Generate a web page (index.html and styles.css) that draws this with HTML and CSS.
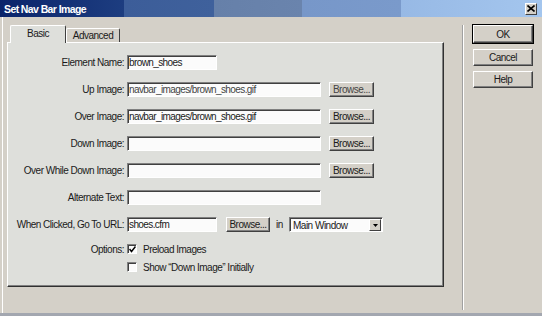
FILE: index.html
```html
<!DOCTYPE html>
<html>
<head>
<meta charset="utf-8">
<link rel="stylesheet" href="styles.css">
</head>
<body>
<div class="window">
  <div class="titlebar">
    <span class="title">Set Nav Bar Image</span>
    <span class="close">
      <svg width="8" height="7" viewBox="0 0 8 7"><path d="M0.5 0.5 L7.5 6.5 M7.5 0.5 L0.5 6.5" stroke="#000" stroke-width="1.6"/></svg>
    </span>
  </div>
  <div class="client">
    <div class="left">
      <div class="tabs">
        <div class="tab active">Basic</div>
        <div class="tab">Advanced</div>
      </div>
      <div class="panel">
        <div class="form">
          <div class="lbl">Element Name:</div>
          <div class="fld"><div class="input short">brown_shoes</div></div>

          <div class="lbl">Up Image:</div>
          <div class="fld"><div class="input long faint">navbar_images/brown_shoes.gif</div><div class="btn browse faint">Browse...</div></div>

          <div class="lbl">Over Image:</div>
          <div class="fld"><div class="input long">navbar_images/brown_shoes.gif</div><div class="btn browse">Browse...</div></div>

          <div class="lbl">Down Image:</div>
          <div class="fld"><div class="input long"></div><div class="btn browse">Browse...</div></div>

          <div class="lbl">Over While Down Image:</div>
          <div class="fld"><div class="input long"></div><div class="btn browse">Browse...</div></div>

          <div class="lbl">Alternate Text:</div>
          <div class="fld"><div class="input long"></div></div>

          <div class="lbl">When Clicked, Go To URL:</div>
          <div class="fld">
            <div class="input short">shoes.cfm</div>
            <div class="btn browse url">Browse...</div>
            <span class="in">in</span>
            <div class="select"><span class="sel-text">Main Window</span><span class="sel-btn"><svg width="5" height="3" viewBox="0 0 5 3"><path d="M0 0 H5 L2.5 3 Z" fill="#000"/></svg></span></div>
          </div>

          <div class="lbl opt-lbl">Options:</div>
          <div class="fld opts">
            <div class="chk-row"><span class="chk"><svg width="7" height="7" viewBox="0 0 7 7"><path d="M0.5 3 L2.5 5.5 L6.5 0.5" stroke="#000" stroke-width="1.5" fill="none"/></svg></span><span>Preload Images</span></div>
            <div class="chk-row"><span class="chk"></span><span>Show “Down Image” Initially</span></div>
          </div>
        </div>
      </div>
    </div>
    <div class="sep"></div>
    <div class="right">
      <div class="btn cmd default">OK</div>
      <div class="btn cmd">Cancel</div>
      <div class="btn cmd">Help</div>
    </div>
  </div>
</div>
</body>
</html>
```
FILE: styles.css
```css
html, body {
  margin: 0;
  padding: 0;
}
body {
  width: 542px;
  height: 316px;
  overflow: hidden;
  font-family: "Liberation Sans", Arial, sans-serif;
  font-size: 10px;
  letter-spacing: -0.5px;
  color: #1a1a1a;
  background: #d4d0c8;
}
.window {
  width: 542px;
  height: 316px;
  box-sizing: border-box;
  background: #d4d0c8;
  border-bottom: 3px solid #a3a7b0;
  display: flex;
  flex-direction: column;
}
.titlebar {
  height: 17px;
  flex: none;
  display: flex;
  align-items: center;
  justify-content: space-between;
  padding: 0 5px 0 4px;
  background: linear-gradient(to right,
    #0a246a 0px, #1d3d80 124px,
    #3c5d99 124px, #3f619c 214px,
    #6680a9 214px, #6a84ad 302px,
    #7797c9 302px, #7a9acb 401px,
    #97b9e5 401px, #a4c6ee 542px);
}
.title {
  color: #fff;
  font-weight: bold;
  font-size: 10.5px;
  letter-spacing: -0.6px;
}
.close {
  width: 12px;
  height: 12px;
  box-sizing: border-box;
  background: #d4d0c8;
  border: 1px solid;
  border-color: #fff #404040 #404040 #fff;
  display: flex;
  align-items: center;
  justify-content: center;
}
.client {
  flex: 1;
  display: flex;
  margin-left: 2px;
  border-left: 1px solid #fff;
  padding-top: 8px;
}
.left {
  margin-left: 4px;
  width: 437px;
}
.tabs {
  height: 17px;
  display: flex;
  align-items: flex-end;
  padding-left: 3px;
}
.tab {
  height: 14px;
  width: 54px;
  box-sizing: border-box;
  border: 1px solid;
  border-color: #fff #404040 transparent #fff;
  border-bottom: none;
  border-radius: 2px 2px 0 0;
  display: flex;
  align-items: center;
  justify-content: center;
  background: #d4d0c8;
}
.tab.active {
  height: 18px;
  width: 56px;
  margin-bottom: -1px;
  position: relative;
  z-index: 1;
  background: #dedfdb;
  padding-bottom: 2px;
}
.panel {
  height: 245px;
  box-sizing: border-box;
  background: #dedfdb;
  border: 1px solid;
  border-color: #fff #303030 #303030 #fff;
  box-shadow: inset -1px -1px 0 #808080;
}
.form {
  display: grid;
  grid-template-columns: 116px 1fr;
  column-gap: 3px;
  row-gap: 12px;
  padding-top: 12px;
}
.lbl {
  text-align: right;
  height: 15px;
  line-height: 15px;
  white-space: nowrap;
}
.fld {
  display: flex;
  align-items: center;
  height: 15px;
}
.input {
  height: 15px;
  box-sizing: border-box;
  background: #fbfbfb;
  border: 1px solid;
  border-color: #808080 #fff #fff #808080;
  box-shadow: inset 1px 1px 0 #404040;
  padding: 0 1px;
  line-height: 13px;
  letter-spacing: -0.6px;
  white-space: nowrap;
  overflow: hidden;
}
.input.short { width: 90px; }
.input.long { width: 194px; }
.faint { color: #444; }
.btn {
  box-sizing: border-box;
  background: #d4d0c8;
  border: 1px solid;
  border-color: #fff #404040 #404040 #fff;
  box-shadow: inset -1px -1px 0 #808080;
  display: flex;
  align-items: center;
  justify-content: center;
  white-space: nowrap;
}
.browse {
  width: 45px;
  height: 15px;
  margin-left: 8px;
}
.browse.url {
  width: 44px;
  margin-left: 9px;
}
.in {
  margin-left: 6px;
  width: 9px;
}
.select {
  margin-left: 4px;
  width: 94px;
  height: 15px;
  box-sizing: border-box;
  background: #fbfbfb;
  border: 1px solid;
  border-color: #808080 #fff #fff #808080;
  box-shadow: inset 1px 1px 0 #404040;
  display: flex;
  align-items: center;
  justify-content: space-between;
  padding: 1px 1px 0 3px;
}
.sel-btn {
  width: 12px;
  height: 12px;
  box-sizing: border-box;
  background: #d4d0c8;
  border: 1px solid;
  border-color: #fff #404040 #404040 #fff;
  display: flex;
  align-items: center;
  justify-content: center;
}
.opt-lbl {
  height: 10px;
  line-height: 11px;
}
.opts {
  height: auto;
  flex-direction: column;
  align-items: flex-start;
  gap: 8px;
}
.chk-row {
  display: flex;
  align-items: center;
  height: 10px;
  gap: 6px;
}
.chk {
  width: 10px;
  height: 10px;
  box-sizing: border-box;
  background: #fbfbfb;
  border: 1px solid;
  border-color: #808080 #fff #fff #808080;
  box-shadow: inset 1px 1px 0 #404040;
  display: flex;
  align-items: center;
  justify-content: center;
}
.sep {
  margin-left: 18px;
  width: 1px;
  height: 285px;
  background: #a0a0a0;
  border-right: 1px solid #fff;
}
.right {
  margin-left: 9px;
  width: 60px;
  display: flex;
  flex-direction: column;
}
.cmd {
  width: 60px;
  height: 17px;
  margin-bottom: 5px;
}
.cmd.default {
  height: 18px;
  margin-bottom: 6px;
  outline: 1px solid #000;
  outline-offset: 0;
}
```
